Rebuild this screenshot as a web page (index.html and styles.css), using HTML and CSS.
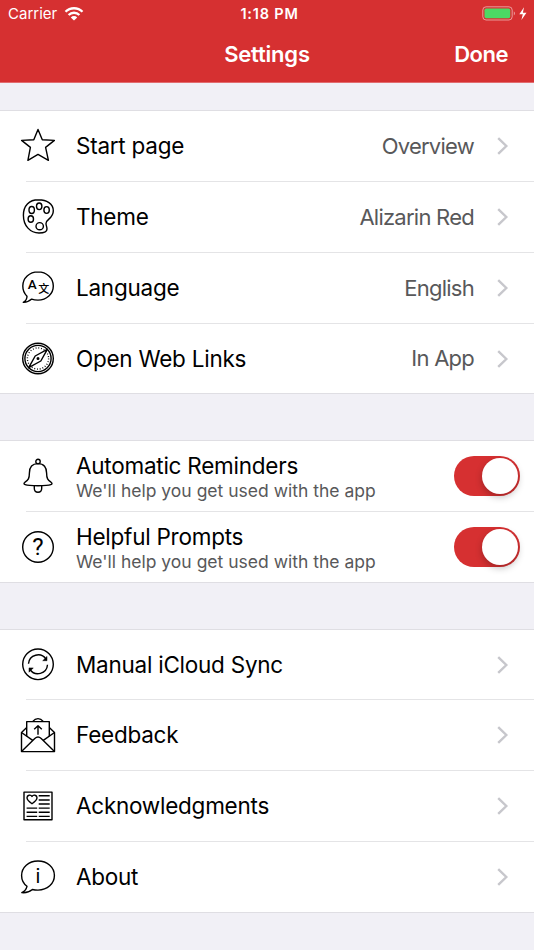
FILE: index.html
```
<!DOCTYPE html>
<html lang="en">
<head>
  <meta charset="UTF-8">
  <title>Settings</title>
  <link rel="stylesheet" href="styles.css">
</head>
<body>
  <header class="header">
    <div class="status-bar">
      <div class="carrier">
        <span>Carrier</span>
        <svg width="20" height="14" viewBox="0 0 20 14">
          <path d="M1.5 4.8a12 12 0 0 1 17 0M4.6 8a7.6 7.6 0 0 1 10.8 0" fill="none" stroke="#fff" stroke-width="2.3"/>
          <path d="M10 13.6 6.8 10.4a4.6 4.6 0 0 1 6.4 0z" fill="#fff"/>
        </svg>
      </div>
      <div class="time">1:18 PM</div>
      <div class="battery">
        <svg width="45" height="16" viewBox="0 0 45 16">
          <rect x=".8" y=".8" width="29.4" height="13.2" rx="3.3" fill="none" stroke="#fff" stroke-opacity=".5"/>
          <rect x="2.5" y="2.6" width="25.7" height="9.6" rx="1.6" fill="#4cd964"/>
          <path d="M31.8 5.3v4.2q2.4-2.1 0-4.2z" fill="#fff" fill-opacity=".5"/>
          <path d="M42 1.3 37.3 8.3h3.5l-1.4 5.8L44.5 6.7h-3.6z" fill="#fff"/>
        </svg>
      </div>
    </div>
    <div class="nav-bar">
      <div class="title">Settings</div>
      <div class="done">Done</div>
    </div>
  </header>

  <main>
    <section class="group">
      <div class="row">
        <svg class="icon" viewBox="0 0 36 36"><path d="M18 1.4 22.3 11.8 34.4 12.4 25.6 19.4 28.4 32.3 18 26.4 7.9 32.3 10.4 19.4 1.6 12.4 13.8 11.8z"/></svg>
        <div class="content">
          <div class="label">Start page</div>
          <div class="value">Overview</div>
          <svg class="chevron" viewBox="0 0 12 18"><path d="M1.2 1.2 9.3 9l-8.1 7.8"/></svg>
        </div>
      </div>
      <div class="row">
        <svg class="icon" viewBox="0 0 36 36">
          <path d="M18.5.8C9 .8 3.4 7 3.4 16.2 3.4 27 10.4 34 19 34c4.6 0 8-1.3 8-4 0-2.3-1-3.4-1-5.6 0-4.6 7.3-4.4 7.3-12.6C33.3 4.8 26.6.8 18.5.8z"/>
          <ellipse cx="11.7" cy="11" rx="2.7" ry="3.5"/>
          <ellipse cx="19.2" cy="7.3" rx="2.7" ry="3.3"/>
          <ellipse cx="26.6" cy="11" rx="2.7" ry="3.4"/>
          <ellipse cx="10.8" cy="20" rx="2.7" ry="3.3"/>
          <ellipse cx="19.7" cy="27.2" rx="3.7" ry="3.6"/>
        </svg>
        <div class="content">
          <div class="label">Theme</div>
          <div class="value">Alizarin Red</div>
          <svg class="chevron" viewBox="0 0 12 18"><path d="M1.2 1.2 9.3 9l-8.1 7.8"/></svg>
        </div>
      </div>
      <div class="row">
        <svg class="icon" viewBox="0 0 36 36">
          <path d="M18 1.9C9.4 1.9 2.8 8 2.8 16c0 4.6 1.5 7.6 4.2 10.2 0 2.7-1.2 4.6-3.7 6.2 4.2.2 6.4-1.5 8.4-3.3 1.8.7 4 1 6.3 1 8.6 0 15.3-6.1 15.3-14.1S26.6 1.9 18 1.9z"/>
          <text class="glyph-a" x="12.3" y="19">A</text>
          <text class="glyph-wen" x="18.2" y="23.2">文</text>
        </svg>
        <div class="content">
          <div class="label">Language</div>
          <div class="value">English</div>
          <svg class="chevron" viewBox="0 0 12 18"><path d="M1.2 1.2 9.3 9l-8.1 7.8"/></svg>
        </div>
      </div>
      <div class="row short">
        <svg class="icon" viewBox="0 0 36 36">
          <circle cx="18" cy="17.5" r="15.3"/>
          <circle cx="18" cy="17.5" r="13.1"/>
          <circle class="ticks" cx="18" cy="17.5" r="10.6"/>
          <path d="M27.3 8.3 20.8 20 8.7 26.7 15.2 15z"/>
          <circle cx="18" cy="17.5" r=".8"/>
        </svg>
        <div class="content">
          <div class="label">Open Web Links</div>
          <div class="value">In App</div>
          <svg class="chevron" viewBox="0 0 12 18"><path d="M1.2 1.2 9.3 9l-8.1 7.8"/></svg>
        </div>
      </div>
    </section>

    <section class="group">
      <div class="row">
        <svg class="icon" viewBox="0 0 36 36">
          <circle cx="18" cy="3.5" r="2.2"/>
          <path d="M18 5.6C12 5.6 9.4 9.5 9.4 15c0 5.5-1.2 7-4.4 9.2-1.5 1.1-1.2 2.1.2 2.5 3.8 1.3 21.8 1.3 25.6 0 1.4-.4 1.7-1.4.2-2.5C27.8 22 26.6 20.5 26.6 15 26.6 9.5 24 5.6 18 5.6z"/>
          <path d="M14.3 27.7v2.5c0 5.3 7.4 5.3 7.4 0v-2.5"/>
        </svg>
        <div class="content">
          <div class="text">
            <div class="label">Automatic Reminders</div>
            <div class="detail">We'll help you get used with the app</div>
          </div>
          <div class="switch"><div class="knob"></div></div>
        </div>
      </div>
      <div class="row">
        <svg class="icon" viewBox="0 0 36 36">
          <circle cx="18" cy="18" r="15.3"/>
          <text class="glyph-q" x="18" y="26.3">?</text>
        </svg>
        <div class="content">
          <div class="text">
            <div class="label">Helpful Prompts</div>
            <div class="detail">We'll help you get used with the app</div>
          </div>
          <div class="switch"><div class="knob"></div></div>
        </div>
      </div>
    </section>

    <section class="group">
      <div class="row short">
        <svg class="icon" viewBox="0 0 36 36">
          <circle cx="18" cy="17.3" r="15.3"/>
          <path d="M8.5 16.8A9.6 9.6 0 0 1 26 12.1M27.5 17.8A9.6 9.6 0 0 1 10 22.5"/>
          <path d="M27 9.4v4.3h-4.300zM9 25.200v-4.300h4.300z" fill="#000" stroke-width=".5"/>
        </svg>
        <div class="content">
          <div class="label">Manual iCloud Sync</div>
          <svg class="chevron" viewBox="0 0 12 18"><path d="M1.2 1.2 9.3 9l-8.1 7.8"/></svg>
        </div>
      </div>
      <div class="row">
        <svg class="icon" viewBox="0 0 36 36">
          <path d="M6.7 10.5 1.5 15.5V34.6h33V15.5l-5.2-5"/>
          <path d="M6.7 19.3V4.6h22.6v14.7M12.5 4.6c3.5-4 7.5-4 11 0"/>
          <path d="M1.5 15.5 12.7 23.4M34.5 15.5 23.3 23.4M1.5 34.6l13.3-13.2q3.2-3 6.4 0l13.3 13.2"/>
          <path d="M18 17.7V8.7M14.2 12.3 18 8.7l3.8 3.6"/>
        </svg>
        <div class="content">
          <div class="label">Feedback</div>
          <svg class="chevron" viewBox="0 0 12 18"><path d="M1.2 1.2 9.3 9l-8.1 7.8"/></svg>
        </div>
      </div>
      <div class="row">
        <svg class="icon" viewBox="0 0 36 36">
          <rect x="4" y="4.1" width="28" height="27.6"/>
          <path d="M12 15.8C9 13.7 7 12 7 9.8 7 6.8 10.8 6.3 12 8.5 13.2 6.3 17 6.8 17 9.8 17 12 15 13.7 12 15.8z"/>
          <path d="M18.7 7.7h11M18.7 12h11M18.7 16h11M18.7 20.1h11M18.7 24.2h11M18.7 28.4h11M6.6 20.1h10.6M6.6 24.2h10.6M6.6 28.4h10.6"/>
        </svg>
        <div class="content">
          <div class="label">Acknowledgments</div>
          <svg class="chevron" viewBox="0 0 12 18"><path d="M1.2 1.2 9.3 9l-8.1 7.8"/></svg>
        </div>
      </div>
      <div class="row">
        <svg class="icon" viewBox="0 0 36 36">
          <path d="M18 2C8.5 2 1.6 8.4 1.6 16.5c0 4.7 2 8.3 5.4 10.8-.7 3-2.5 5-5.2 6.3 4.4.4 8-.9 10.6-3.1 1.7.4 3.6.6 5.6.6 9.500 0 16.400-6.500 16.400-14.600S27.500 2 18 2z"/>
          <text class="glyph-i" x="18" y="24">i</text>
        </svg>
        <div class="content">
          <div class="label">About</div>
          <svg class="chevron" viewBox="0 0 12 18"><path d="M1.2 1.2 9.3 9l-8.1 7.8"/></svg>
        </div>
      </div>
    </section>
  </main>
</body>
</html>
```
FILE: styles.css
```
* {
  box-sizing: border-box;
}

body {
  margin: 0;
  background-color: #f1f0f6;
  font-family: Inter, "Liberation Sans", sans-serif;
  color: #000;
  overflow: hidden;
}

/* Header */
.header {
  height: 83px;
  background-color: #d63031;
  border-bottom: 1px solid #e26c6f;
  color: white;
}

.status-bar {
  display: grid;
  grid-template-columns: 1fr auto 1fr;
  align-items: center;
  height: 27px;
  padding: 0 7px 0 8px;
  font-size: 15px;
}

.carrier {
  display: flex;
  align-items: center;
  gap: 7px;
}

.carrier svg,
.battery svg {
  display: block;
}

.time {
  margin-left: 4px;
  font-weight: 600;
  font-size: 14.5px;
  letter-spacing: 0.8px;
}

.battery {
  justify-self: end;
}

.nav-bar {
  display: grid;
  grid-template-columns: 1fr auto 1fr;
  height: 55px;
  padding: 0 26px;
  font-size: 22px;
  line-height: 55px;
  font-weight: 600;
  letter-spacing: -0.2px;
}

.title {
  grid-column: 2;
}

.done {
  text-align: right;
  letter-spacing: -0.5px;
}

/* Groups */
main {
  padding-top: 27px;
}

.group {
  margin-bottom: 46px;
  background-color: white;
  border-top: 1px solid #dfdee3;
}

.row {
  display: flex;
  height: 71px;
  padding-left: 26px;
}

.row.short {
  height: 70px;
}

.row:last-child {
  border-bottom: 1px solid #dfdee3;
}

.icon {
  flex: none;
  width: 36px;
  height: 36px;
  margin: 17px 0 0 -6px;
  fill: none;
  stroke: #000;
  stroke-width: 1.4;
  stroke-linejoin: round;
}

.icon text {
  fill: #000;
  stroke: none;
}

.icon .ticks {
  stroke-width: 1.4;
  stroke-dasharray: 0.9 1.875;
}

.glyph-a {
  font-family: Roboto, sans-serif;
  font-size: 13.5px;
  font-weight: 500;
  text-anchor: middle;
}

.glyph-wen {
  font-family: "Noto Sans CJK SC", sans-serif;
  font-size: 11px;
  font-weight: 500;
}

.glyph-q {
  font-family: Roboto, sans-serif;
  font-size: 24px;
  text-anchor: middle;
}

.glyph-i {
  font-size: 20px;
  text-anchor: middle;
}

.content {
  display: flex;
  flex: 1;
  align-items: center;
  margin-left: -30px;
  padding: 0 25px 0 50px;
  border-bottom: 1px solid #e4e4e6;
}

.row:last-child .content {
  border-bottom: none;
}

.label {
  flex: 1;
  padding-bottom: 1px;
  font-size: 22.5px;
  line-height: 27px;
  letter-spacing: -0.25px;
}

.value {
  font-size: 22px;
  line-height: 27px;
  letter-spacing: -0.75px;
  color: #58585a;
}

.chevron {
  width: 12px;
  height: 18px;
  margin-left: 23px;
  fill: none;
  stroke: #c7c7cc;
  stroke-width: 2.4;
}

.text {
  flex: 1;
  padding-top: 2px;
}

.detail {
  font-size: 17.5px;
  line-height: 22px;
  color: #58585a;
}

/* Switch */
.switch {
  width: 66px;
  height: 40px;
  margin-right: -11px;
  padding: 2px;
  border-radius: 20px;
  background-color: #d63031;
}

.knob {
  width: 36px;
  height: 36px;
  margin-left: auto;
  border-radius: 50%;
  background-color: white;
  box-shadow: 0 3px 7px rgba(0, 0, 0, 0.25);
}
```
